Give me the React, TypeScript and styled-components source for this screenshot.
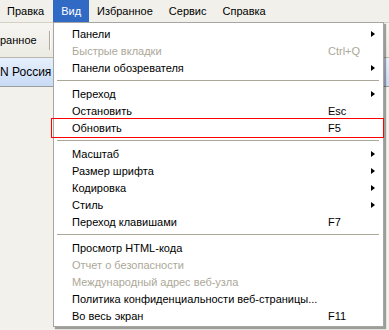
import React from 'react'
import styled, { createGlobalStyle } from 'styled-components'

const GlobalStyle = createGlobalStyle`
  html, body {
    margin: 0;
    padding: 0;
    background: #f2f1ec;
  }
  body {
    font-family: 'Liberation Sans', Arial, sans-serif;
    font-size: 11px;
    color: #000;
  }
`

const Window = styled.div`
  position: relative;
  width: 389px;
  height: 330px;
  overflow: hidden;
  display: flex;
  flex-direction: column;
  background: #f2f1ec;
`

const MenuBar = styled.div`
  height: 22px;
  display: flex;
  align-items: stretch;
  background: #f1f0ea;
`

const MenuTitle = styled.div<{ active?: boolean }>`
  display: flex;
  align-items: center;
  padding: 0 8px;
  font-size: 11px;
  color: ${({ active }) => (active ? '#ffffff' : '#000000')};
  background: ${({ active }) => (active ? '#316ac5' : 'transparent')};
  &:first-child {
    padding-left: 7px;
    padding-right: 9px;
  }
`

const Content = styled.div`
  position: relative;
  flex: 1;
  display: flex;
  flex-direction: column;
`

const Toolbar = styled.div`
  height: 34px;
  display: flex;
  align-items: center;
  border-top: 1px solid #d4d0c4;
  border-bottom: 1px solid #b9b7ae;
  background: linear-gradient(#f6f5f1, #eceae3);
`

const ToolButton = styled.span`
  padding-right: 12px;
  white-space: nowrap;
`

const ToolDivider = styled.span`
  width: 1px;
  height: 19px;
  background: #a9a7a0;
  border-right: 1px solid #ffffff;
`

const TabBand = styled.div`
  height: 28px;
  display: flex;
  align-items: center;
  background: linear-gradient(#e6f0fc, #c8dbf5);
  border-bottom: 1px solid #9c9c9c;
  font-size: 12px;
`

const TabTitle = styled.span`
  width: 52px;
  overflow: hidden;
  white-space: nowrap;
`

const PageArea = styled.div`
  flex: 1;
  background: #f2f1ec;
`

const Dropdown = styled.div`
  position: absolute;
  left: 53px;
  top: 0;
  width: 329px;
  padding: 2px 0;
  background: #ffffff;
  border: 1px solid #a7a6a0;
  box-shadow: 2px 2px 1px rgba(0, 0, 0, 0.35);
`

const Item = styled.div<{ disabled?: boolean }>`
  position: relative;
  height: 17px;
  display: grid;
  grid-template-columns: 1fr 43px 12px;
  align-items: center;
  padding-left: 18px;
  white-space: nowrap;
  color: ${({ disabled }) => (disabled ? '#aca899' : '#000000')};
`

const Shortcut = styled.span``

const Arrow = styled.span`
  width: 0;
  height: 0;
  border-top: 3.5px solid transparent;
  border-bottom: 3.5px solid transparent;
  border-left: 4px solid #000;
`

const Separator = styled.div`
  height: 9px;
  display: flex;
  align-items: center;
  padding: 0 4px 0 3px;
  &::after {
    content: '';
    flex: 1;
    height: 1px;
    background: #aca899;
  }
`

const Marker = styled.div`
  position: absolute;
  left: -3px;
  right: -1px;
  top: -1px;
  bottom: -2px;
  border: 1px solid #ff0000;
  pointer-events: none;
`

type Entry =
  | { sep: true }
  | { label: string; key?: string; sub?: boolean; disabled?: boolean; mark?: boolean }

const entries: Entry[] = [
  { label: 'Панели', sub: true },
  { label: 'Быстрые вкладки', key: 'Ctrl+Q', disabled: true },
  { label: 'Панели обозревателя', sub: true },
  { sep: true },
  { label: 'Переход', sub: true },
  { label: 'Остановить', key: 'Esc' },
  { label: 'Обновить', key: 'F5', mark: true },
  { sep: true },
  { label: 'Масштаб', sub: true },
  { label: 'Размер шрифта', sub: true },
  { label: 'Кодировка', sub: true },
  { label: 'Стиль', sub: true },
  { label: 'Переход клавишами', key: 'F7' },
  { sep: true },
  { label: 'Просмотр HTML-кода' },
  { label: 'Отчет о безопасности', disabled: true },
  { label: 'Международный адрес веб-узла', disabled: true },
  { label: 'Политика конфиденциальности веб-страницы...' },
  { label: 'Во весь экран', key: 'F11' },
]

const menus = ['Правка', 'Вид', 'Избранное', 'Сервис', 'Справка']

export default function App() {
  return (
    <Window>
      <GlobalStyle />
      <MenuBar>
        {menus.map((m) => (
          <MenuTitle key={m} active={m === 'Вид'}>
            {m}
          </MenuTitle>
        ))}
      </MenuBar>
      <Content>
        <Toolbar>
          <ToolButton>ранное</ToolButton>
          <ToolDivider />
        </Toolbar>
        <TabBand>
          <TabTitle>N Россия: н</TabTitle>
        </TabBand>
        <PageArea />
        <Dropdown>
          {entries.map((e, i) =>
            'sep' in e ? (
              <Separator key={i} />
            ) : (
              <Item key={i} disabled={e.disabled}>
                <span>{e.label}</span>
                <Shortcut>{e.key ?? ''}</Shortcut>
                {e.sub ? <Arrow /> : <span />}
                {e.mark && <Marker />}
              </Item>
            )
          )}
        </Dropdown>
      </Content>
    </Window>
  )
}
